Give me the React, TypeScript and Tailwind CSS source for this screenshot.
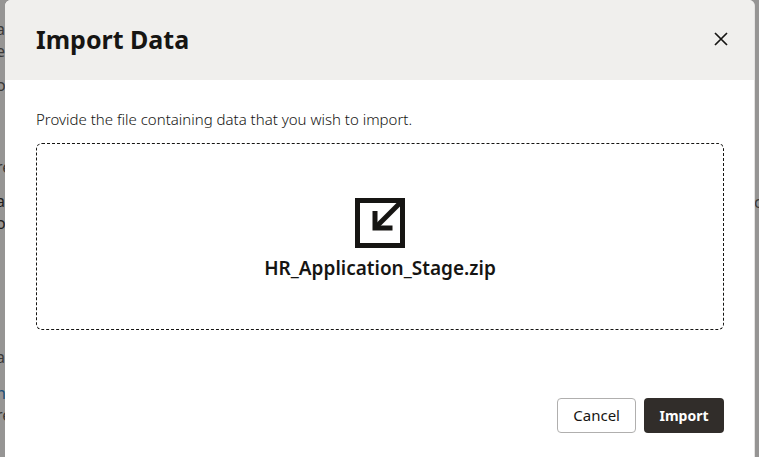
import React from "react";

type Line = { text: string; gap: string; color?: string };

const leftLines: Line[] = [
  { text: "a", gap: "mt-[18px]" },
  { text: "e", gap: "mt-0" },
  { text: "o", gap: "mt-3" },
  { text: "re", gap: "mt-[60px]" },
  { text: "a", gap: "mt-3", color: "text-[#1f1e1d]" },
  { text: "o", gap: "mt-0", color: "text-[#1f1e1d]" },
  { text: "a", gap: "mt-28" },
  { text: "nc", gap: "mt-[14px]", color: "text-[#1c4f7a]" },
  { text: "re", gap: "mt-0" },
];

function PageBehind() {
  return (
    <div
      aria-hidden="true"
      className="absolute inset-0 flex justify-between overflow-hidden bg-[#969594] text-base leading-[22px] text-[#3a3938]"
    >
      <div className="-ml-1 flex flex-col">
        {leftLines.map((line, i) => (
          <span key={i} className={`${line.gap} ${line.color ?? ""}`}>
            {line.text}
          </span>
        ))}
      </div>
      <div className="w-[5px] pt-[191px]">
        <span>c</span>
      </div>
    </div>
  );
}

function ImportIcon() {
  return (
    <svg viewBox="0 0 50 50" className="size-[50px]" fill="none" stroke="#161513" aria-hidden="true">
      <rect x="2.5" y="2.5" width="45" height="45" strokeWidth="5" />
      <path d="M47 3 L21 29" strokeWidth="5" />
      <path d="M20 13 V30 H37.5" strokeWidth="5" />
    </svg>
  );
}

export default function App() {
  return (
    <div className="relative flex min-h-screen font-['Noto_Sans','Open_Sans',sans-serif] text-[#161513]">
      <PageBehind />
      <div
        role="dialog"
        aria-modal="true"
        aria-labelledby="dialog-title"
        className="relative ml-[5px] mr-1 flex flex-1 flex-col overflow-hidden rounded-t-md border-r border-[#e4e3e2] bg-white"
      >
        <header className="flex h-20 items-start justify-between bg-[#f0efed] pl-[31px] pr-[23px] pt-[23px]">
          <h1 id="dialog-title" className="text-[25px] font-bold leading-8">
            Import Data
          </h1>
          <button type="button" aria-label="Close" className="flex h-8 w-5 items-center justify-center">
            <svg viewBox="0 0 14 14" className="size-[14px]" fill="none" stroke="#161513" strokeWidth="1.7" aria-hidden="true">
              <path d="M1 1 L13 13 M13 1 L1 13" />
            </svg>
          </button>
        </header>

        <main className="flex flex-1 flex-col pl-[31px] pr-[30px] pt-7">
          <label htmlFor="file" className="text-[15px] font-light leading-[23px] text-[#161513]">
            Provide the file containing data that you wish to import.
          </label>
          <button
            id="file"
            type="button"
            className="mt-3 flex h-[187px] flex-col items-center justify-center gap-2 rounded-md border border-dashed border-[#161513] pt-1"
          >
            <ImportIcon />
            <span className="text-[19px] font-semibold leading-6">HR_Application_Stage.zip</span>
          </button>
        </main>

        <footer className="flex justify-end gap-2 pl-[31px] pr-[30px] pb-6 pt-8 leading-5">
          <button
            type="button"
            className="h-[35px] rounded border border-[#b0afae] bg-white px-[15px] pb-0.5 text-[15px]"
          >
            Cancel
          </button>
          <button type="button" className="h-[35px] w-20 rounded bg-[#312d2a] text-sm font-bold text-white">
            Import
          </button>
        </footer>
      </div>
    </div>
  );
}
